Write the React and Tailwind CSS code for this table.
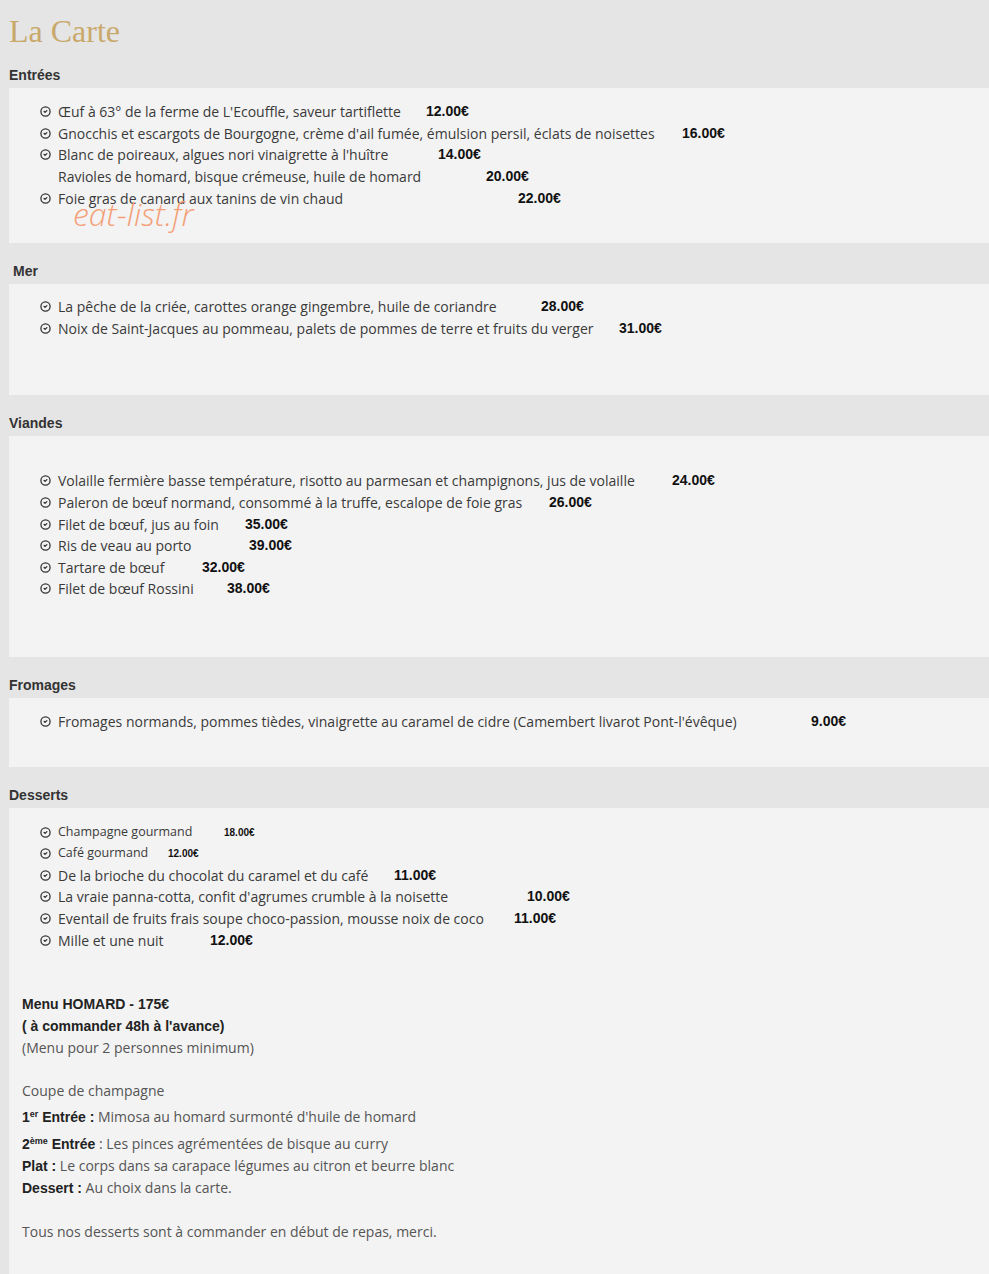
import React from 'react';
import { CircleCheck } from 'lucide-react';

const sections = [
  {
    title: 'Entrées',
    pad: 'pt-[13px] pb-[34px]',
    items: [
      { name: "Œuf à 63° de la ferme de L'Ecouffle, saveur tartiflette", price: '12.00€', x: 426 },
      { name: "Gnocchis et escargots de Bourgogne, crème d'ail fumée, émulsion persil, éclats de noisettes", price: '16.00€', x: 682 },
      { name: "Blanc de poireaux, algues nori vinaigrette à l'huître", price: '14.00€', x: 438 },
      { name: 'Ravioles de homard, bisque crémeuse, huile de homard', price: '20.00€', x: 486, noIcon: true },
      { name: 'Foie gras de canard aux tanins de vin chaud', price: '22.00€', x: 518 },
    ],
    watermark: true,
  },
  {
    title: 'Mer',
    indent: true,
    pad: 'pt-[12px] pb-[56px]',
    items: [
      { name: 'La pêche de la criée, carottes orange gingembre, huile de coriandre', price: '28.00€', x: 541 },
      { name: 'Noix de Saint-Jacques au pommeau, palets de pommes de terre et fruits du verger', price: '31.00€', x: 619 },
    ],
  },
  {
    title: 'Viandes',
    pad: 'pt-[34px] pb-[57px]',
    items: [
      { name: 'Volaille fermière basse température, risotto au parmesan et champignons, jus de volaille', price: '24.00€', x: 672 },
      { name: 'Paleron de bœuf normand, consommé à la truffe, escalope de foie gras', price: '26.00€', x: 549 },
      { name: 'Filet de bœuf, jus au foin', price: '35.00€', x: 245 },
      { name: 'Ris de veau au porto', price: '39.00€', x: 249 },
      { name: 'Tartare de bœuf', price: '32.00€', x: 202 },
      { name: 'Filet de bœuf Rossini', price: '38.00€', x: 227 },
    ],
  },
  {
    title: 'Fromages',
    pad: 'pt-[13px] pb-[35px]',
    items: [
      { name: "Fromages normands, pommes tièdes, vinaigrette au caramel de cidre (Camembert livarot Pont-l'évêque)", price: '9.00€', x: 811 },
    ],
  },
];

const desserts = [
  { name: 'Champagne gourmand', price: '18.00€', x: 224, small: true },
  { name: 'Café gourmand', price: '12.00€', x: 168, small: true },
  { name: 'De la brioche du chocolat du caramel et du café', price: '11.00€', x: 394 },
  { name: "La vraie panna-cotta, confit d'agrumes crumble à la noisette", price: '10.00€', x: 527 },
  { name: 'Eventail de fruits frais soupe choco-passion, mousse noix de coco', price: '11.00€', x: 514 },
  { name: 'Mille et une nuit', price: '12.00€', x: 210 },
];

function Item({ item }) {
  // description width comes from the data so each price lands where the original tabs put it
  return (
    <div className="flex items-center h-[21.6px] pl-[30px] text-[#3a3a3a]">
      <span className="w-[12px] flex justify-center">
        {!item.noIcon && <CircleCheck size={11} strokeWidth={2.8} className="text-[#333]" />}
      </span>
      <span
        style={{ width: item.x - 58 }}
        className={`ml-[7px] whitespace-nowrap ${item.small ? 'text-[12.5px]' : 'text-[14px]'}`}
      >
        {item.name}
      </span>
      <span className={`font-['Liberation_Sans',Arial,sans-serif] font-bold text-[#111] ${item.small ? 'text-[10px]' : 'text-[14px]'}`}>
        {item.price}
      </span>
    </div>
  );
}

function Heading({ title, indent }) {
  return (
    <h3 className={`font-['Liberation_Sans',Arial,sans-serif] pt-[19px] pb-[4px] leading-[18px] text-[14px] font-bold text-[#333] ${indent ? 'pl-[4px]' : ''}`}>
      {title}
    </h3>
  );
}

export default function App() {
  return (
    <div className="min-h-[1274px] bg-[#e5e5e5] pl-[9px] overflow-hidden font-['Open_Sans',sans-serif]">
      <h1 className="font-['Liberation_Serif','Times_New_Roman',serif] pt-[16px] pb-[1px] leading-[30px] text-[32px] text-[#c9a96b]">
        La Carte
      </h1>

      {sections.map((s) => (
        <div key={s.title}>
          <Heading title={s.title} indent={s.indent} />
          <div className={`relative bg-[#f3f3f3] ${s.pad}`}>
            {s.items.map((it) => (
              <Item key={it.name} item={it} />
            ))}
            {s.watermark && (
              <span className="absolute left-[64px] top-[110px] text-[32px] italic font-light text-[#f4a078] leading-none">
                eat-list.fr
              </span>
            )}
          </div>
        </div>
      ))}

      <Heading title="Desserts" />
      <div className="bg-[#f3f3f3] pt-[13px] pb-[40px]">
        {desserts.map((it) => (
          <Item key={it.name} item={it} />
        ))}

        <div className="pl-[13px] mt-[42px] text-[14px] text-[#555]">
          <div className="font-['Liberation_Sans',Arial,sans-serif] font-bold text-[#222] leading-[22px]">
            <p>Menu HOMARD - 175€</p>
            <p>( à commander 48h à l'avance)</p>
          </div>
          <p className="leading-[22px]">(Menu pour 2 personnes minimum)</p>

          <p className="mt-[21px] leading-[22px]">Coupe de champagne</p>
          <p className="mt-[4px] leading-[22px]">
            <b className="font-['Liberation_Sans',Arial,sans-serif] text-[#222]">1<sup className="text-[9px]">er</sup> Entrée :</b> Mimosa au homard surmonté d'huile de homard
          </p>
          <p className="mt-[5px] leading-[22px]">
            <b className="font-['Liberation_Sans',Arial,sans-serif] text-[#222]">2<sup className="text-[9px]">ème</sup> Entrée</b> : Les pinces agrémentées de bisque au curry
          </p>
          <p className="leading-[21px]">
            <b className="font-['Liberation_Sans',Arial,sans-serif] text-[#222]">Plat :</b> Le corps dans sa carapace légumes au citron et beurre blanc
          </p>
          <p className="leading-[21px]">
            <b className="font-['Liberation_Sans',Arial,sans-serif] text-[#222]">Dessert :</b> Au choix dans la carte.
          </p>

          <p className="mt-[22px] leading-[22px]">Tous nos desserts sont à commander en début de repas, merci.</p>
        </div>
      </div>
    </div>
  );
}
